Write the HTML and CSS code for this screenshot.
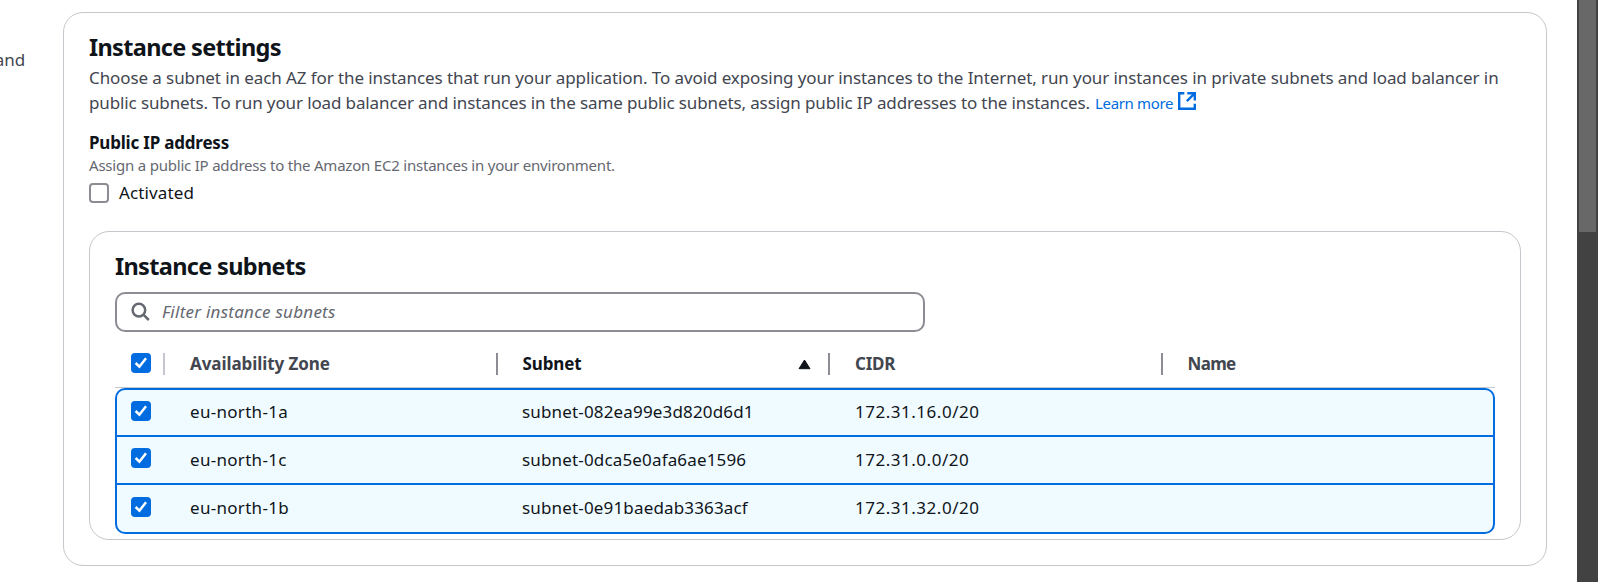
FILE: index.html
```
<!DOCTYPE html>
<html lang="en">
<head>
<meta charset="utf-8">
<title>Instance settings</title>
<link rel="stylesheet" href="styles.css">
</head>
<body>
<svg class="defs" width="0" height="0"><defs>
  <symbol id="tick" viewBox="0 0 20 20"><path d="M4.6 10 8.4 13.7 15 5.2" fill="none" stroke="#fff" stroke-width="2.5"/></symbol>
</defs></svg>
<div class="page">
  <aside class="side"><span>and</span></aside>
  <main class="card">
    <h2 class="title">Instance settings</h2>
    <p class="desc"><span class="line l1">Choose a subnet in each AZ for the instances that run your application. To avoid exposing your instances to the Internet, run your instances in private subnets and load balancer in</span><span class="line l2"><span>public subnets. To run your load balancer and instances in the same public subnets, assign public IP addresses to the instances.</span><a class="learn">Learn more</a><svg class="ext" width="18" height="18" viewBox="0 0 18 18" fill="none" stroke="#006ce0" stroke-width="2.4"><path d="M6.3 1.2H1.2v15.6h15.6v-5.1M9.3 1.2h7.5v7.3M16.5 1.5 8.8 9.2"/></svg></span></p>
    <div class="label">Public IP address</div>
    <div class="hint">Assign a public IP address to the Amazon EC2 instances in your environment.</div>
    <div class="option"><span class="box"></span><span>Activated</span></div>
    <section class="inner">
      <h2 class="title">Instance subnets</h2>
      <div class="filter">
        <svg width="20" height="20" viewBox="0 0 20 20" fill="none" stroke="#656871" stroke-width="2.5"><circle cx="7.9" cy="8.1" r="6.3"/><path d="M12.4 12.6 17.8 18"/></svg>
        <span>Filter instance subnets</span>
      </div>
      <div class="row head">
        <div class="c0"><svg class="check"><use href="#tick"/></svg></div>
        <div class="cell">Availability Zone</div>
        <div class="cell sorted"><span>Subnet</span><svg width="13" height="11" viewBox="0 0 13 11"><path d="M6.5 1 12 9.7H1Z" fill="#0f141a" stroke="#0f141a" stroke-linejoin="round"/></svg></div>
        <div class="cell cidr">CIDR</div>
        <div class="cell name">Name</div>
      </div>
      <div class="rows">
        <div class="row r1"><div class="c0"><svg class="check"><use href="#tick"/></svg></div><div class="cell az">eu-north-1a</div><div class="cell sn">subnet-082ea99e3d820d6d1</div><div class="cell ip">172.31.16.0/20</div><div class="cell"></div></div>
        <div class="row r2"><div class="c0"><svg class="check"><use href="#tick"/></svg></div><div class="cell az">eu-north-1c</div><div class="cell sn">subnet-0dca5e0afa6ae1596</div><div class="cell ip">172.31.0.0/20</div><div class="cell"></div></div>
        <div class="row r3"><div class="c0"><svg class="check"><use href="#tick"/></svg></div><div class="cell az">eu-north-1b</div><div class="cell sn">subnet-0e91baedab3363acf</div><div class="cell ip">172.31.32.0/20</div><div class="cell"></div></div>
      </div>
    </section>
  </main>
  <div class="scroll"><div class="thumb"></div></div>
</div>
</body>
</html>
```
FILE: styles.css
```
* { box-sizing: border-box; }
body { margin: 0; background: #fff; color: #0f141a; font: 17px/25px "Noto Sans", sans-serif; overflow: hidden; }
.defs { display: block; }
.page { display: flex; height: 582px; align-items: flex-start; }
.side { width: 63px; padding-top: 47px; color: #424650; display: flex; }
.side span { width: 25px; display: flex; justify-content: flex-end; letter-spacing: -0.1px; }
.card { width: 1484px; height: 554px; margin-top: 12px; padding: 19px 25px 0; border: 1px solid #c6c6cd; border-radius: 20px; }
.title { margin: 0; font-size: 23.5px; line-height: 30px; font-weight: 700; letter-spacing: -0.67px; white-space: nowrap; }
.desc { margin: 3px 0 14px; color: #424650; }
.line { display: flex; white-space: nowrap; }
.l1 { letter-spacing: -0.09px; }
.l2 { letter-spacing: -0.122px; }
.l2 > span { width: 1006px; }
.learn { color: #006ce0; font-size: 15px; letter-spacing: -0.34px; width: 83px; padding-top: 1px; }
.ext { margin-top: 2px; }
.label { font-weight: 700; letter-spacing: -0.2px; }
.hint { color: #656871; font-size: 15px; line-height: 20px; letter-spacing: -0.21px; }
.option { display: flex; margin-top: 5px; height: 25px; letter-spacing: 0.12px; }
.box { width: 20px; height: 20px; border: 2px solid #8c8c94; border-radius: 4px; margin: 3px 10px 0 0; }
.inner { margin-top: 26px; width: 1432px; height: 309px; padding: 19px 25px 0; border: 1px solid #c6c6cd; border-radius: 20px; }
.filter { margin-top: 11px; width: 810px; height: 40px; border: 2px solid #8c8c94; border-radius: 10px; display: flex; align-items: center; padding: 0 0 2px 14px; gap: 11px; color: #656871; font-style: italic; letter-spacing: 0.25px; }
.filter svg { margin-top: 2px; }
.row { display: flex; width: 100%; }
.cell { width: 332.5px; padding-left: 25px; white-space: nowrap; }
.c0 { width: 50px; flex: none; padding-left: 16px; }
.check { display: block; width: 20px; height: 20px; border-radius: 4px; background: #006ce0; }
.head { margin-top: 8px; padding-top: 13px; height: 48px; border-bottom: 1px solid #c6c6cd; width: 1380px; font-weight: 700; color: #424650; letter-spacing: -0.08px; }
.head .cell, .head .c0 { height: 22px; line-height: 22px; border-right: 2px solid #8c8c94; }
.head .c0 { border-color: #c6c6cd; }
.head .cell:last-child { border: 0; }
.head .sorted { display: flex; align-items: center; justify-content: space-between; color: #0f141a; padding-right: 17px; letter-spacing: -0.12px; }
.head .cidr { letter-spacing: -0.28px; }
.head .name { letter-spacing: -0.68px; }
.rows { width: 1380px; height: 146px; border: 2px solid #006ce0; border-radius: 10px; background: #f0fbff; }
.rows .row { border-bottom: 2px solid #006ce0; line-height: 43px; }
.rows .c0 { width: 48px; padding-left: 14px; }
.r1 { height: 47px; }
.r2 { height: 48px; }
.rows .r3 { height: 47px; border: 0; }
.r1 .check { margin-top: 11px; }
.r2 .check { margin-top: 11px; }
.r3 .check { margin-top: 12px; }
.rows .r2, .rows .r3 { line-height: 45px; }
.az { letter-spacing: 0.3px; }
.sn { letter-spacing: 0.16px; }
.rows .ip { letter-spacing: 0.52px; padding-left: 26px; }
.scroll { margin-left: 30px; width: 21px; height: 582px; padding: 0 2px; background: #424242; }
.thumb { height: 232px; background: #686868; }
```
